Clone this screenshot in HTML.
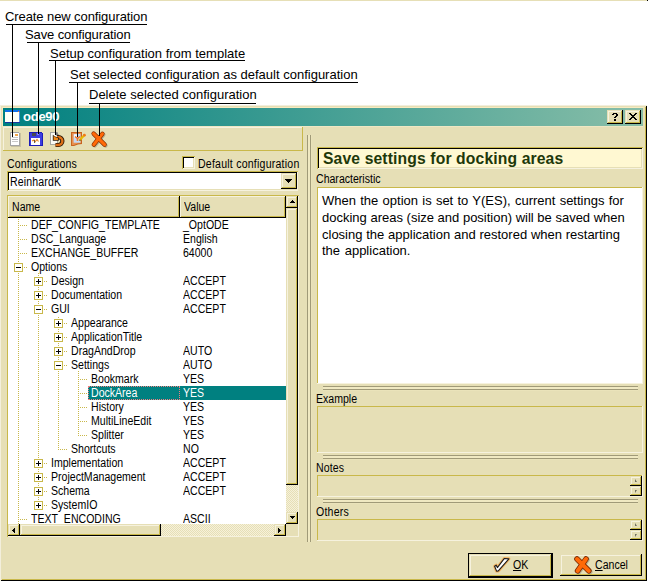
<!DOCTYPE html>
<html><head><meta charset="utf-8">
<style>
*{margin:0;padding:0;box-sizing:border-box}
html,body{width:648px;height:582px;overflow:hidden;background:#fff}
body{position:relative;font-family:"Liberation Sans",sans-serif;color:#000}
.a{position:absolute}
.t{position:absolute;white-space:nowrap;line-height:1}
.lbl{font-size:13px}
.k{position:absolute;background:#000}
.ui{font-size:12px;transform:scaleX(0.88);transform-origin:0 0}
.btn{position:absolute;background:#E6DFB6;box-shadow:inset -1px -1px #000,inset 1px 1px #E6DFB6,inset -2px -2px #C9B84A,inset 2px 2px #F6F2DE}
.hdr{position:absolute;background:#E6DFB6;box-shadow:inset -1px -1px #000,inset 1px 1px #F6F2DE,inset -2px -2px #C9B84A}
.sunk{position:absolute;box-shadow:inset -1px -1px #F6F2DE,inset 1px 1px #C9B84A}
.gl{position:absolute;background:#A09A78}
.hl{position:absolute;background:#F6F2DE}
.dith{position:absolute;background-color:#E6DFB6;background-image:repeating-conic-gradient(#F6F1DA 0 25%,#E6DFB6 0 50%);background-size:2px 2px}
.row{position:absolute;height:14px;line-height:14px;font-size:12px;white-space:nowrap;transform:scaleX(0.88);transform-origin:0 0}
.dv{position:absolute;width:1px;background-image:linear-gradient(to bottom,#C9B84A 50%,transparent 50%);background-size:1px 2px}
.dh{position:absolute;height:1px;background-image:linear-gradient(to right,#C9B84A 50%,transparent 50%);background-size:2px 1px}
.box{position:absolute;width:9px;height:9px;border:1px solid #C9B84A;background:#fff}
.box i{position:absolute;left:1px;top:3px;width:5px;height:1px;background:#000}
.box b{position:absolute;left:3px;top:1px;width:1px;height:5px;background:#000}
</style></head><body>

<div class="a" style="left:0;top:0;width:647px;height:1px;background:#E6DFB6"></div>
<div class="a" style="left:647px;top:0;width:1px;height:1px;background:#000"></div>
<div class="a" style="left:0;top:105px;width:647px;height:476px;background:#E6DFB6;box-shadow:inset 1px 1px #F3EFDC,inset -1px -1px #000,inset 2px 2px #E6DFB6,inset -2px -2px #C9B84A"></div>
<div class="a" style="left:2px;top:107px;width:642px;height:1px;background:#F8EBC0"></div>
<div class="a" style="left:2px;top:107px;width:1px;height:20px;background:#F8EBC0"></div>
<div class="a" style="left:3px;top:108px;width:640px;height:18px;background:linear-gradient(to right,#008080,#88BEA8)"></div>
<svg class="a" style="left:5px;top:110px" width="15" height="13" viewBox="0 0 15 13">
<rect x="0" y="0" width="15" height="2" fill="#1070E8"/>
<rect x="13" y="1" width="1" height="1" fill="#F06030"/>
<rect x="0" y="2" width="14" height="10" fill="#FFFFF8"/>
<rect x="14" y="2" width="1" height="10" fill="#5890E0"/>
<rect x="0" y="12" width="15" height="1" fill="#1838A0"/>
</svg>
<div class="t" style="left:23px;top:110px;font-size:13px;font-weight:bold;color:#fff;line-height:14px;letter-spacing:-0.25px">ode90</div>
<div class="btn" style="left:607px;top:110px;width:16px;height:14px"></div>
<div class="btn" style="left:625px;top:110px;width:16px;height:14px"></div>
<svg class="a" style="left:612px;top:113px" width="6" height="8" shape-rendering="crispEdges" fill="#000"><rect x="1" y="0" width="1" height="1"/><rect x="2" y="0" width="1" height="1"/><rect x="3" y="0" width="1" height="1"/><rect x="4" y="0" width="1" height="1"/><rect x="0" y="1" width="1" height="1"/><rect x="1" y="1" width="1" height="1"/><rect x="4" y="1" width="1" height="1"/><rect x="5" y="1" width="1" height="1"/><rect x="4" y="2" width="1" height="1"/><rect x="5" y="2" width="1" height="1"/><rect x="3" y="3" width="1" height="1"/><rect x="4" y="3" width="1" height="1"/><rect x="2" y="4" width="1" height="1"/><rect x="3" y="4" width="1" height="1"/><rect x="2" y="6" width="1" height="1"/><rect x="3" y="6" width="1" height="1"/><rect x="2" y="7" width="1" height="1"/><rect x="3" y="7" width="1" height="1"/></svg>
<svg class="a" style="left:629px;top:113px" width="8" height="7" shape-rendering="crispEdges" fill="#000"><rect x="0" y="0" width="1" height="1"/><rect x="1" y="0" width="1" height="1"/><rect x="6" y="0" width="1" height="1"/><rect x="7" y="0" width="1" height="1"/><rect x="1" y="1" width="1" height="1"/><rect x="2" y="1" width="1" height="1"/><rect x="5" y="1" width="1" height="1"/><rect x="6" y="1" width="1" height="1"/><rect x="2" y="2" width="1" height="1"/><rect x="3" y="2" width="1" height="1"/><rect x="4" y="2" width="1" height="1"/><rect x="5" y="2" width="1" height="1"/><rect x="3" y="3" width="1" height="1"/><rect x="4" y="3" width="1" height="1"/><rect x="2" y="4" width="1" height="1"/><rect x="3" y="4" width="1" height="1"/><rect x="4" y="4" width="1" height="1"/><rect x="5" y="4" width="1" height="1"/><rect x="1" y="5" width="1" height="1"/><rect x="2" y="5" width="1" height="1"/><rect x="5" y="5" width="1" height="1"/><rect x="6" y="5" width="1" height="1"/><rect x="0" y="6" width="1" height="1"/><rect x="1" y="6" width="1" height="1"/><rect x="6" y="6" width="1" height="1"/><rect x="7" y="6" width="1" height="1"/></svg>
<div class="a" style="left:3px;top:126px;width:640px;height:1px;background:#EEE7C4"></div>
<div class="a" style="left:3px;top:127px;width:300px;height:24px;box-shadow:inset -1px -1px #C9B84A,inset 1px 1px #F6F2DE"></div>
<svg class="a" style="left:0;top:126px" width="120" height="24" viewBox="0 126 120 24">
<!-- page -->
<rect x="11" y="133" width="10" height="14" fill="#C8C2A0"/>
<rect x="10" y="132" width="10" height="14" fill="#A4A4A4"/>
<rect x="11" y="133" width="8" height="12" fill="#FFFFFF"/>
<rect x="19" y="132" width="1" height="1" fill="#D8D8D8"/>
<rect x="15" y="134" width="3" height="2" fill="#F0A850"/>
<rect x="12" y="137" width="6" height="1" fill="#C8C8C8"/>
<rect x="12" y="139" width="6" height="1" fill="#B8B8B8"/>
<rect x="12" y="141" width="6" height="1" fill="#C8C8C8"/>
<!-- floppy -->
<rect x="29" y="132" width="14" height="14" fill="#1C1CB8"/>
<rect x="30" y="133" width="12" height="12" fill="#3C3CE0"/>
<rect x="42" y="132" width="1" height="1" fill="#E6DFB6"/>
<rect x="32" y="133" width="4" height="3" fill="#484850"/>
<rect x="37" y="133" width="2" height="2" fill="#8080F8"/>
<rect x="31" y="138" width="9" height="7" fill="#FFFFFF"/>
<path d="M32 141 L34 140 L35 142 L37 139.5 L38.5 141.5" fill="none" stroke="#E88820" stroke-width="1.2"/>
<path d="M34.5 140 V143" stroke="#404040" stroke-width="0.8"/>
<!-- undo -->
<rect x="50.5" y="132.5" width="7" height="12" fill="#FAFAF4" stroke="#A8A8A0" stroke-width="1"/>
<path d="M56 132 L59.5 135.5 L56 135.5 Z" fill="#707070"/>
<path d="M57 137.2 H58.5 A3.9 3.9 0 0 1 58.5 145 H55.5" fill="none" stroke="#2A1808" stroke-width="4.2"/>
<path d="M57 137.2 H58.5 A3.9 3.9 0 0 1 58.5 145 H55.5" fill="none" stroke="#E07018" stroke-width="2.4"/>
<path d="M52.8 134.8 L55 136.5 L58.8 137.5 L58.8 140.8 L52.8 140.8 Z" fill="#2A1808"/>
<path d="M53.6 135.8 L55.4 137.3 L58 138 L58 140 L53.6 140 Z" fill="#F08818"/>
<!-- checklist -->
<path d="M71 132 H82 V144 L78 144.5 L74 146 H71 Z" fill="#C86420"/>
<path d="M72 133 H81 V143 L77.5 143.5 L74 145 H72 Z" fill="#E89050"/>
<rect x="73.6" y="134" width="6.8" height="8.7" fill="#C4DAF6"/>
<rect x="74" y="134.4" width="3" height="3" fill="#F4F8FF"/>
<path d="M75 136.5 L77.5 138.5 L80 136.5 M77.5 138.5 V141" fill="none" stroke="#F07828" stroke-width="1.6"/>
<path d="M84.5 135 L79.5 140.2" stroke="#E8B800" stroke-width="2.2"/>
<path d="M80.2 139.4 L79 141 L80.8 140.6 Z" fill="#404020"/>
<circle cx="84.4" cy="135.2" r="1.4" fill="#F07818"/>
<!-- X -->
<path d="M93.6 133.6 L104.6 144.6 M102.4 133.8 L93.8 144.6" fill="none" stroke="#6E6C58" stroke-width="4.2" stroke-linecap="round" opacity="0.4" transform="translate(1,0.8)"/>
<path d="M93.6 133.6 L104.6 144.6 M102.4 133.8 L93.8 144.6" fill="none" stroke="#8A3000" stroke-width="4.4" stroke-linecap="round"/>
<path d="M93.6 133.6 L104.6 144.6 M102.4 133.8 L93.8 144.6" fill="none" stroke="#FF6A08" stroke-width="3.1" stroke-linecap="round"/>
</svg>
<div class="t lbl" style="left:5px;top:10px;letter-spacing:-0.09px">Create new configuration</div>
<div class="k" style="left:6px;top:24px;width:141px;height:1px"></div>
<div class="k" style="left:12px;top:25px;width:1px;height:112px"></div>
<div class="t lbl" style="left:25px;top:27.5px;letter-spacing:-0.12px">Save configuration</div>
<div class="k" style="left:27px;top:42px;width:103px;height:1px"></div>
<div class="k" style="left:38px;top:43px;width:1px;height:91px"></div>
<div class="t lbl" style="left:50px;top:46.5px;letter-spacing:0px">Setup configuration from template</div>
<div class="k" style="left:49px;top:60px;width:196px;height:1px"></div>
<div class="k" style="left:55px;top:61px;width:1px;height:74px"></div>
<div class="t lbl" style="left:70px;top:68px;letter-spacing:0px">Set selected configuration as default configuration</div>
<div class="k" style="left:69px;top:82px;width:289px;height:1px"></div>
<div class="k" style="left:77px;top:83px;width:1px;height:54px"></div>
<div class="t lbl" style="left:89px;top:88px;letter-spacing:0px">Delete selected configuration</div>
<div class="k" style="left:89px;top:103px;width:167px;height:1px"></div>
<div class="k" style="left:99px;top:104px;width:1px;height:32px"></div>
<div class="a" style="left:307px;top:135px;width:5px;height:407px;background:linear-gradient(to right,#A09A78 0 1px,#F0E9C2 1px 3px,#A09A78 3px 4px,#EAE3BA 4px 5px)"></div>
<div class="t ui" style="left:7px;top:158px;letter-spacing:0.15px">Configurations</div>
<div class="a" style="left:182px;top:156px;width:13px;height:13px;background:#fff;box-shadow:inset 1px 1px #C9B84A,inset -1px -1px #F6F2DE,inset 2px 2px #000,inset -2px -2px #E6DFB6"></div>
<div class="t ui" style="left:198px;top:158px;letter-spacing:0.25px">Default configuration</div>
<div class="a" style="left:7px;top:171px;width:291px;height:20px;background:#fff;box-shadow:inset 1px 1px #C9B84A,inset -1px -1px #F6F2DE,inset 2px 2px #000,inset -2px -2px #E6DFB6"></div>
<div class="t ui" style="left:10px;top:176px;letter-spacing:0.15px">ReinhardK</div>
<div class="btn" style="left:281px;top:173px;width:16px;height:16px;box-shadow:inset -1px -1px #000,inset 1px 1px #E6DFB6,inset -2px -2px #C9B84A,inset 2px 2px #F6F2DE"></div>
<svg class="a" style="left:285px;top:179px" width="7" height="4" shape-rendering="crispEdges"><rect x="0" y="0" width="7" height="1"/><rect x="1" y="1" width="5" height="1"/><rect x="2" y="2" width="3" height="1"/><rect x="3" y="3" width="1" height="1"/></svg>
<div class="a" style="left:7px;top:195px;width:292px;height:342px;background:#fff;box-shadow:inset 1px 1px #C9B84A,inset -1px -1px #F6F2DE"></div>
<div class="hdr" style="left:8px;top:196px;width:172px;height:22px"></div>
<div class="hdr" style="left:180px;top:196px;width:106px;height:22px"></div>
<div class="t ui" style="left:12px;top:201px">Name</div>
<div class="t ui" style="left:184px;top:201px">Value</div>
<div class="a" style="left:8px;top:218px;width:278px;height:306px;overflow:hidden">
<div class="a" style="left:80px;top:168px;width:198px;height:14px;background:#008080"></div>
<div class="a" style="left:80px;top:168px;width:92px;height:14px;outline:1px dotted #F08080;outline-offset:-1px"></div>
<div class="dv" style="left:10px;top:1px;height:306px"></div>
<div class="dv" style="left:30px;top:55px;height:233px"></div>
<div class="dv" style="left:50px;top:99px;height:133px"></div>
<div class="dv" style="left:70px;top:153px;height:65px"></div>
<div class="dh" style="left:10px;top:7px;width:10px"></div>
<div class="row" style="left:23px;top:0px;color:#000">DEF_CONFIG_TEMPLATE</div>
<div class="row" style="left:175px;top:0px;color:#000">_OptODE</div>
<div class="dh" style="left:10px;top:21px;width:10px"></div>
<div class="row" style="left:23px;top:14px;color:#000">DSC_Language</div>
<div class="row" style="left:175px;top:14px;color:#000">English</div>
<div class="dh" style="left:10px;top:35px;width:10px"></div>
<div class="row" style="left:23px;top:28px;color:#000">EXCHANGE_BUFFER</div>
<div class="row" style="left:175px;top:28px;color:#000">64000</div>
<div class="dh" style="left:10px;top:49px;width:10px"></div>
<div class="box" style="left:6px;top:45px"><i></i></div>
<div class="row" style="left:23px;top:42px;color:#000">Options</div>
<div class="dh" style="left:30px;top:63px;width:10px"></div>
<div class="box" style="left:26px;top:59px"><i></i><b></b></div>
<div class="row" style="left:43px;top:56px;color:#000">Design</div>
<div class="row" style="left:175px;top:56px;color:#000">ACCEPT</div>
<div class="dh" style="left:30px;top:77px;width:10px"></div>
<div class="box" style="left:26px;top:73px"><i></i><b></b></div>
<div class="row" style="left:43px;top:70px;color:#000">Documentation</div>
<div class="row" style="left:175px;top:70px;color:#000">ACCEPT</div>
<div class="dh" style="left:30px;top:91px;width:10px"></div>
<div class="box" style="left:26px;top:87px"><i></i></div>
<div class="row" style="left:43px;top:84px;color:#000">GUI</div>
<div class="row" style="left:175px;top:84px;color:#000">ACCEPT</div>
<div class="dh" style="left:50px;top:105px;width:10px"></div>
<div class="box" style="left:46px;top:101px"><i></i><b></b></div>
<div class="row" style="left:63px;top:98px;color:#000">Appearance</div>
<div class="dh" style="left:50px;top:119px;width:10px"></div>
<div class="box" style="left:46px;top:115px"><i></i><b></b></div>
<div class="row" style="left:63px;top:112px;color:#000">ApplicationTitle</div>
<div class="dh" style="left:50px;top:133px;width:10px"></div>
<div class="box" style="left:46px;top:129px"><i></i><b></b></div>
<div class="row" style="left:63px;top:126px;color:#000">DragAndDrop</div>
<div class="row" style="left:175px;top:126px;color:#000">AUTO</div>
<div class="dh" style="left:50px;top:147px;width:10px"></div>
<div class="box" style="left:46px;top:143px"><i></i></div>
<div class="row" style="left:63px;top:140px;color:#000">Settings</div>
<div class="row" style="left:175px;top:140px;color:#000">AUTO</div>
<div class="dh" style="left:70px;top:161px;width:10px"></div>
<div class="row" style="left:83px;top:154px;color:#000">Bookmark</div>
<div class="row" style="left:175px;top:154px;color:#000">YES</div>
<div class="dh" style="left:70px;top:175px;width:10px"></div>
<div class="row" style="left:83px;top:168px;color:#fff">DockArea</div>
<div class="row" style="left:175px;top:168px;color:#fff">YES</div>
<div class="dh" style="left:70px;top:189px;width:10px"></div>
<div class="row" style="left:83px;top:182px;color:#000">History</div>
<div class="row" style="left:175px;top:182px;color:#000">YES</div>
<div class="dh" style="left:70px;top:203px;width:10px"></div>
<div class="row" style="left:83px;top:196px;color:#000">MultiLineEdit</div>
<div class="row" style="left:175px;top:196px;color:#000">YES</div>
<div class="dh" style="left:70px;top:217px;width:10px"></div>
<div class="row" style="left:83px;top:210px;color:#000">Splitter</div>
<div class="row" style="left:175px;top:210px;color:#000">YES</div>
<div class="dh" style="left:50px;top:231px;width:10px"></div>
<div class="row" style="left:63px;top:224px;color:#000">Shortcuts</div>
<div class="row" style="left:175px;top:224px;color:#000">NO</div>
<div class="dh" style="left:30px;top:245px;width:10px"></div>
<div class="box" style="left:26px;top:241px"><i></i><b></b></div>
<div class="row" style="left:43px;top:238px;color:#000">Implementation</div>
<div class="row" style="left:175px;top:238px;color:#000">ACCEPT</div>
<div class="dh" style="left:30px;top:259px;width:10px"></div>
<div class="box" style="left:26px;top:255px"><i></i><b></b></div>
<div class="row" style="left:43px;top:252px;color:#000">ProjectManagement</div>
<div class="row" style="left:175px;top:252px;color:#000">ACCEPT</div>
<div class="dh" style="left:30px;top:273px;width:10px"></div>
<div class="box" style="left:26px;top:269px"><i></i><b></b></div>
<div class="row" style="left:43px;top:266px;color:#000">Schema</div>
<div class="row" style="left:175px;top:266px;color:#000">ACCEPT</div>
<div class="dh" style="left:30px;top:287px;width:10px"></div>
<div class="box" style="left:26px;top:283px"><i></i><b></b></div>
<div class="row" style="left:43px;top:280px;color:#000">SystemIO</div>
<div class="dh" style="left:10px;top:301px;width:10px"></div>
<div class="row" style="left:23px;top:294px;color:#000">TEXT_ENCODING</div>
<div class="row" style="left:175px;top:294px;color:#000">ASCII</div>
</div>
<div class="dith" style="left:286px;top:196px;width:12px;height:328px"></div>
<div class="btn" style="left:286px;top:196px;width:12px;height:12px"></div>
<svg class="a" style="left:290px;top:200px" width="5" height="3" shape-rendering="crispEdges"><rect x="2" y="0" width="1" height="1"/><rect x="1" y="1" width="3" height="1"/><rect x="0" y="2" width="5" height="1"/></svg>
<div class="btn" style="left:286px;top:208px;width:12px;height:277px"></div>
<div class="btn" style="left:286px;top:512px;width:12px;height:12px"></div>
<svg class="a" style="left:290px;top:516px" width="5" height="3" shape-rendering="crispEdges"><rect x="0" y="0" width="5" height="1"/><rect x="1" y="1" width="3" height="1"/><rect x="2" y="2" width="1" height="1"/></svg>
<div class="dith" style="left:8px;top:524px;width:278px;height:12px"></div>
<div class="btn" style="left:8px;top:524px;width:12px;height:12px"></div>
<svg class="a" style="left:12px;top:528px" width="3" height="5" shape-rendering="crispEdges"><rect x="0" y="2" width="1" height="1"/><rect x="1" y="1" width="1" height="3"/><rect x="2" y="0" width="1" height="5"/></svg>
<div class="btn" style="left:20px;top:524px;width:141px;height:12px"></div>
<div class="btn" style="left:274px;top:524px;width:12px;height:12px"></div>
<svg class="a" style="left:278px;top:528px" width="3" height="5" shape-rendering="crispEdges"><rect x="0" y="0" width="1" height="5"/><rect x="1" y="1" width="1" height="3"/><rect x="2" y="2" width="1" height="1"/></svg>
<div class="a" style="left:286px;top:524px;width:12px;height:12px;background:#E6DFB6"></div>
<div class="a" style="left:317px;top:147px;width:326px;height:22px;background:#FFF8D2;box-shadow:inset 1px 1px #C9B84A,inset -1px -1px #F6F2DE,inset 2px 2px #000,inset -2px -2px #E6DFB6"></div>
<div class="t" style="left:323px;top:150.5px;font-size:15.7px;font-weight:bold;color:#1E380A;letter-spacing:0.13px">Save settings for docking areas</div>
<div class="t ui" style="left:316px;top:173px">Characteristic</div>
<div class="sunk" style="left:317px;top:187px;width:326px;height:197px;background:#fff"></div>
<div class="a" style="left:322px;top:193px;font-size:13px;line-height:16.8px;width:320px;white-space:nowrap"><span style="word-spacing:0.65px">When the option is set to Y(ES), current settings for</span><br>docking areas (size and position) will be saved when<br><span style="word-spacing:0.15px">closing the application and restored when restarting</span><br><span style="word-spacing:1px">the application.</span></div>
<div class="a" style="left:323px;top:386px;width:315px;height:5px;background:linear-gradient(to bottom,#A09A78 0 1px,#F0E9C2 1px 3px,#A09A78 3px 4px,#EAE3BA 4px 5px)"></div>
<div class="t ui" style="left:316px;top:393px">Example</div>
<div class="sunk" style="left:317px;top:406px;width:326px;height:47px"></div>
<div class="a" style="left:323px;top:455px;width:315px;height:5px;background:linear-gradient(to bottom,#A09A78 0 1px,#F0E9C2 1px 3px,#A09A78 3px 4px,#EAE3BA 4px 5px)"></div>
<div class="t ui" style="left:316px;top:462px;letter-spacing:0.15px">Notes</div>
<div class="sunk" style="left:317px;top:475px;width:326px;height:22px"></div>
<div class="a" style="left:323px;top:499px;width:315px;height:5px;background:linear-gradient(to bottom,#A09A78 0 1px,#F0E9C2 1px 3px,#A09A78 3px 4px,#EAE3BA 4px 5px)"></div>
<div class="t ui" style="left:316px;top:506px;letter-spacing:0.25px">Others</div>
<div class="sunk" style="left:317px;top:519px;width:326px;height:22px"></div>
<div class="btn" style="left:630px;top:476px;width:12px;height:10px"></div>
<div class="btn" style="left:630px;top:486px;width:12px;height:10px"></div>
<svg class="a" style="left:634px;top:479px" width="4" height="4"><path d="M1 0 V3 H3 Z" fill="#707060"/></svg>
<svg class="a" style="left:634px;top:489px" width="4" height="4"><path d="M1 1 V4 L3 1 Z" fill="#707060"/></svg>
<div class="btn" style="left:630px;top:520px;width:12px;height:10px"></div>
<div class="btn" style="left:630px;top:530px;width:12px;height:10px"></div>
<svg class="a" style="left:634px;top:523px" width="4" height="4"><path d="M1 0 V3 H3 Z" fill="#707060"/></svg>
<svg class="a" style="left:634px;top:533px" width="4" height="4"><path d="M1 1 V4 L3 1 Z" fill="#707060"/></svg>
<div class="a" style="left:468px;top:553px;width:85px;height:25px;background:#000"></div>
<div class="btn" style="left:469px;top:554px;width:83px;height:23px"></div>
<svg class="a" style="left:490px;top:555px" width="22" height="20" viewBox="0 0 22 20">
<path d="M4.6 11.2 L6.2 10.2 L7.4 12.6 L14.2 3.6 L18.9 3.8 L8.3 15.9 L6.6 16.1 Z" fill="none" stroke="#F4A040" stroke-width="3" stroke-linejoin="round" opacity="0.75"/>
<path d="M4.6 11.2 L6.2 10.2 L7.4 12.6 L14.2 3.6 L18.9 3.8 L8.3 15.9 L6.6 16.1 Z" fill="#fff" stroke="#1A1A1A" stroke-width="1.1" stroke-linejoin="round"/>
</svg>
<div class="t ui" style="left:513px;top:559px"><u>O</u>K</div>
<div class="btn" style="left:560px;top:554px;width:82px;height:22px"></div>
<svg class="a" style="left:572px;top:555px" width="22" height="20" viewBox="0 0 22 20">
<path d="M5 4 L16.8 15.8 M14 4 L5.6 15.8" fill="none" stroke="#6E6C58" stroke-width="5" stroke-linecap="round" opacity="0.4" transform="translate(1.2,0.9)"/>
<path d="M5 4 L16.8 15.8 M14 4 L5.6 15.8" fill="none" stroke="#7A2800" stroke-width="5.6" stroke-linecap="round"/>
<path d="M5 4 L16.8 15.8 M14 4 L5.6 15.8" fill="none" stroke="#FF6A08" stroke-width="4" stroke-linecap="round"/>
</svg>
<div class="t ui" style="left:595px;top:559px"><u>C</u>ancel</div>
</body></html>
